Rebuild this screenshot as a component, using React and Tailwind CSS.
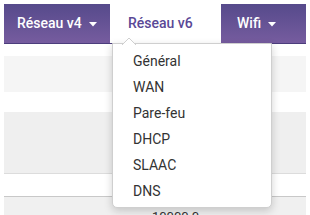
import React from "react";

const Caret = () => (
  <svg width="8" height="5" viewBox="0 0 8 5" className="ml-[7px] mt-[1px]">
    <path d="M0 0 L8 0 L4 4.5 Z" fill="currentColor" />
  </svg>
);

export default function App() {
  const items = ["Général", "WAN", "Pare-feu", "DHCP", "SLAAC", "DNS"];
  return (
    <div
      className="relative w-[310px] h-[215px] overflow-hidden bg-white p-1"
      style={{ fontFamily: "Roboto, 'Liberation Sans', sans-serif" }}
    >
      <nav className="flex h-[40px] border-b border-[#4b3d7c] text-[14px]">
        <div className="flex w-[106px] items-center pl-[13px] font-medium text-white bg-gradient-to-b from-[#564a8b] to-[#765c9f]">
          Réseau v4
          <Caret />
        </div>
        <div className="flex w-[111px] items-center pl-[18px] font-medium text-[#5a4896] bg-white">
          Réseau v6
        </div>
        <div className="flex flex-1 items-center pl-[16px] font-medium text-white bg-gradient-to-b from-[#564a8b] to-[#765c9f]">
          Wifi
          <Caret />
        </div>
      </nav>
      <div className="flex flex-col">
        <div className="h-[12px] bg-white" />
        <div className="h-[36px] bg-[#f5f5f5]" />
        <div className="h-[20px] bg-white" />
        <div className="h-[62px] bg-[#efefef] border-b border-[#dcdcdc]" />
        <div className="h-[23px] bg-white border-b border-[#c8c8c8]" />
        <div className="h-[30px] bg-[#f0f0f0] pl-[148px] pt-[12px] text-[13px] leading-[16px] text-[#333]">
          10000 0
        </div>
      </div>

      <div className="absolute left-[112px] top-[43px] w-[160px] h-[165px] bg-white border border-[#cfcfcf] rounded-b-[5px] shadow-[0_3px_8px_rgba(0,0,0,0.18)] pt-[4px]">
        <svg
          width="14"
          height="8"
          viewBox="0 0 14 8"
          className="absolute left-[9px] top-[-7px]"
        >
          <path d="M0 8 L7 1 L14 8 Z" fill="#fff" />
          <path d="M0 8 L7 1 L14 8" fill="none" stroke="#d0d0d0" strokeWidth="1" />
        </svg>
        {items.map((t) => (
          <div
            key={t}
            className="h-[26px] leading-[26px] pl-[20px] text-[14px] text-[#333]"
          >
            {t}
          </div>
        ))}
      </div>
    </div>
  );
}
